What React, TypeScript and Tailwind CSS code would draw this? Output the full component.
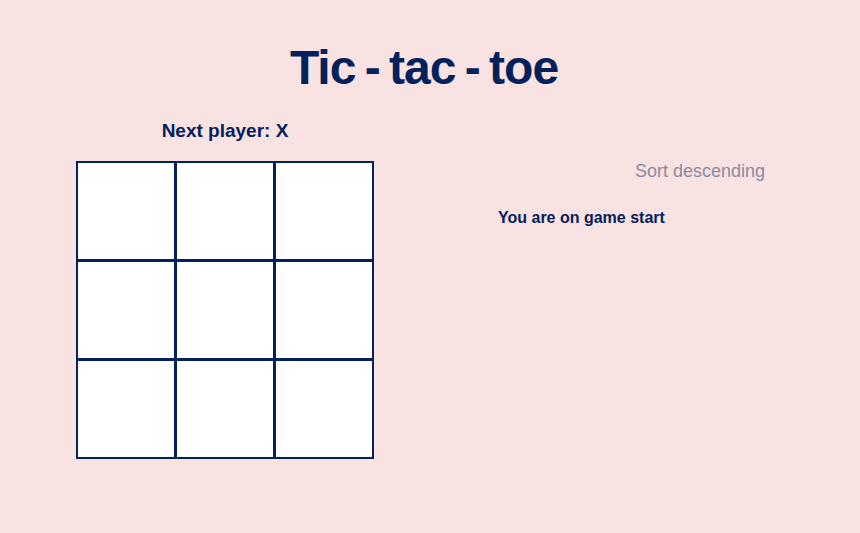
const ROWS = [0, 1, 2]

function Square() {
  return <button type="button" className="-mr-px -mt-px h-[100px] w-[100px] border-2 border-[#03215a] bg-white" />
}

function Board() {
  return (
    <div className="flex flex-col pt-px">
      {ROWS.map((r) => (
        <div key={r} className="flex">
          {ROWS.map((c) => (
            <Square key={c} />
          ))}
        </div>
      ))}
    </div>
  )
}

export default function App() {
  return (
    <div className="min-h-[533px] bg-[#f9e2e2] font-['Liberation_Sans',Arial,sans-serif] text-[#03215a]">
      <h1 className="pr-[12px] pt-[37px] text-center text-[48px] font-bold leading-[62px] tracking-[-1px] [word-spacing:-3px]">
        Tic - tac - toe
      </h1>
      <div className="mt-[20px] flex">
        <div className="ml-[76px] flex w-[298px] flex-col">
          <p className="self-center text-[19px] font-bold leading-[24px]">Next player: X</p>
          <div className="mt-[18px]">
            <Board />
          </div>
        </div>
        <div className="ml-[84px] flex w-[307px] flex-col">
          <button type="button" className="mt-[40px] self-end text-[18px] leading-[24px] text-[#8b8aa3]">
            Sort descending
          </button>
          <ol className="mt-[25px] pl-10">
            <li className="text-[16px] font-bold leading-[20px]">You are on game start</li>
          </ol>
        </div>
      </div>
    </div>
  )
}
